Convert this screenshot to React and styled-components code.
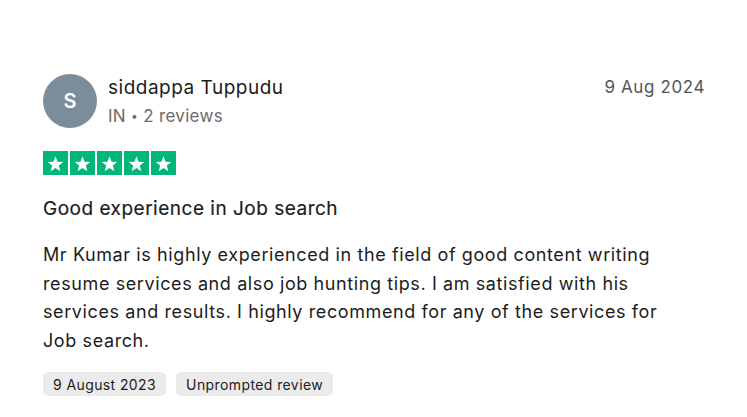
import React from 'react';
import styled, { createGlobalStyle } from 'styled-components';

const GlobalStyle = createGlobalStyle`
  body {
    margin: 0;
    background: #ffffff;
    font-family: Inter, "Liberation Sans", Arial, sans-serif;
  }
`;

const review = {
  initial: 'S',
  name: 'siddappa Tuppudu',
  country: 'IN',
  count: '2 reviews',
  date: '9 Aug 2024',
  rating: 5,
  title: 'Good experience in Job search',
  body:
    'Mr Kumar is highly experienced in the field of good content writing resume services and also job hunting tips. I am satisfied with his services and results. I highly recommend for any of the services for Job search.',
  tags: ['9 August 2023', 'Unprompted review'],
};

const Star = () => (
  <svg width="17" height="17" viewBox="0 0 24 24">
    <path
      fill="#fff"
      d="M12 1.8l2.9 7.6 8.1.4-6.3 5.1 2.1 7.9L12 18.3l-6.8 4.5 2.1-7.9L1 9.8l8.1-.4z"
    />
  </svg>
);

const App = () => (
  <>
    <GlobalStyle />
    <Card>
      <Header>
        <Avatar>{review.initial}</Avatar>
        <Who>
          <Name>{review.name}</Name>
          <Meta>
            {review.country} <Dot>•</Dot> {review.count}
          </Meta>
        </Who>
        <DateText>{review.date}</DateText>
      </Header>
      <Stars>
        {Array.from({ length: review.rating }).map((_, i) => (
          <StarBox key={i}>
            <Star />
          </StarBox>
        ))}
      </Stars>
      <Title>{review.title}</Title>
      <Body>{review.body}</Body>
      <Tags>
        {review.tags.map((t) => (
          <Tag key={t}>{t}</Tag>
        ))}
      </Tags>
    </Card>
  </>
);

export default App;

const Card = styled.div`
  width: 747px;
  box-sizing: border-box;
  padding: 74px 42px 0 43px;
  display: flex;
  flex-direction: column;
`;

const Header = styled.div`
  display: flex;
  align-items: flex-start;
`;

const Avatar = styled.div`
  width: 54px;
  height: 54px;
  border-radius: 50%;
  background: #7b8d9b;
  color: #fff;
  font-size: 20px;
  font-weight: 600;
  display: flex;
  align-items: center;
  justify-content: center;
  flex-shrink: 0;
`;

const Who = styled.div`
  margin-left: 11px;
  display: flex;
  flex-direction: column;
  padding-top: 2px;
`;

const Name = styled.div`
  font-size: 19px;
  letter-spacing: 0.5px;
  color: #1c1c1c;
  line-height: 24px;
`;

const Meta = styled.div`
  margin-top: 5px;
  font-size: 17px;
  letter-spacing: 0.3px;
  color: #6b6b6b;
  line-height: 22px;
`;

const Dot = styled.span`
  font-size: 12px;
  vertical-align: 2px;
`;

const DateText = styled.div`
  margin-left: auto;
  font-size: 17px;
  letter-spacing: 0.6px;
  color: #555;
  line-height: 24px;
  padding-top: 1px;
`;

const Stars = styled.div`
  display: flex;
  gap: 2px;
  margin-top: 23px;
`;

const StarBox = styled.div`
  width: 25px;
  height: 24px;
  background: #00b67a;
  display: flex;
  align-items: center;
  justify-content: center;
`;

const Title = styled.div`
  margin-top: 21px;
  font-size: 19px;
  letter-spacing: 0.5px;
  font-weight: 400;
  color: #1c1c1c;
  -webkit-text-stroke: 0.2px #1c1c1c;
  line-height: 26px;
`;

const Body = styled.p`
  margin: 19px 0 0;
  font-size: 18px;
  letter-spacing: 0.6px;
  line-height: 28.5px;
  color: #1c1c1c;
  max-width: 640px;
`;

const Tags = styled.div`
  display: flex;
  gap: 10px;
  margin-top: 17px;
`;

const Tag = styled.div`
  background: #ebebeb;
  border-radius: 5px;
  padding: 0 10px;
  height: 24px;
  display: flex;
  align-items: center;
  font-size: 14px;
  letter-spacing: 0.4px;
  color: #1c1c1c;
`;
